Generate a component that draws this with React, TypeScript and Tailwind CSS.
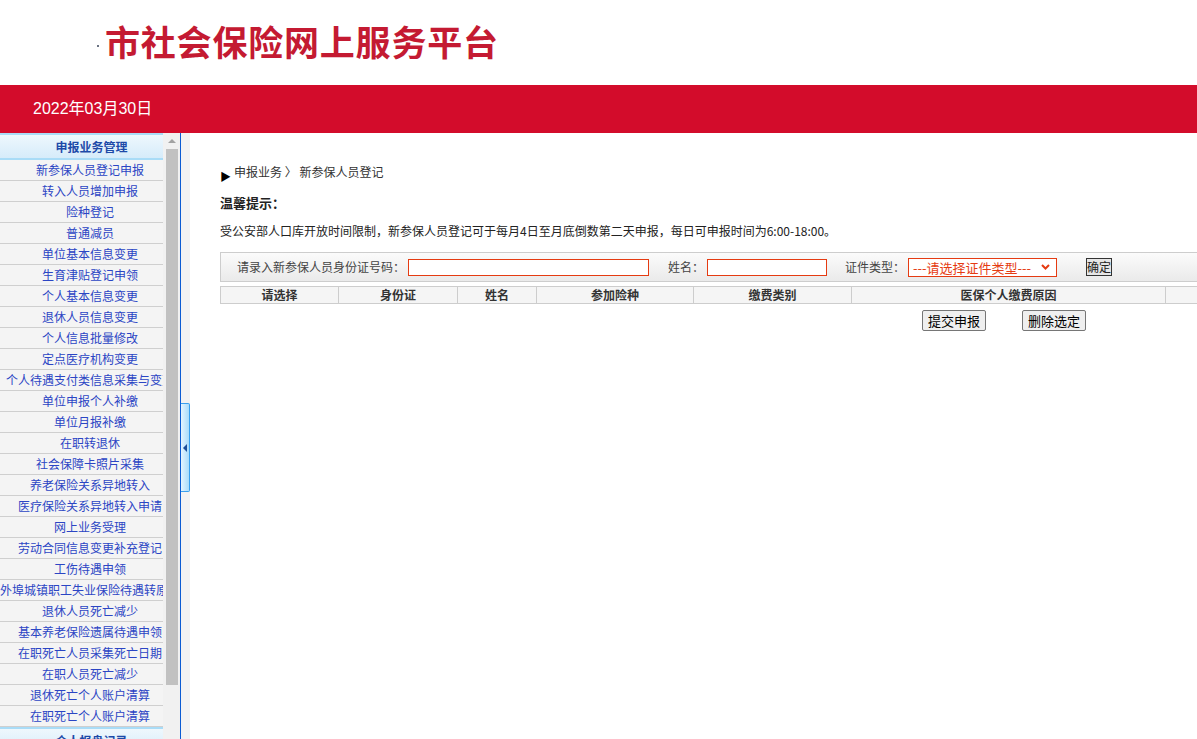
import React from "react";

const items = [
  "新参保人员登记申报",
  "转入人员增加申报",
  "险种登记",
  "普通减员",
  "单位基本信息变更",
  "生育津贴登记申领",
  "个人基本信息变更",
  "退休人员信息变更",
  "个人信息批量修改",
  "定点医疗机构变更",
  "个人待遇支付类信息采集与变更",
  "单位申报个人补缴",
  "单位月报补缴",
  "在职转退休",
  "社会保障卡照片采集",
  "养老保险关系异地转入",
  "医疗保险关系异地转入申请",
  "网上业务受理",
  "劳动合同信息变更补充登记",
  "工伤待遇申领",
  "外埠城镇职工失业保险待遇转原籍",
  "退休人员死亡减少",
  "基本养老保险遗属待遇申领",
  "在职死亡人员采集死亡日期",
  "在职人员死亡减少",
  "退休死亡个人账户清算",
  "在职死亡个人账户清算",
];

const cols = [
  { t: "请选择", w: 118 },
  { t: "身份证", w: 119 },
  { t: "姓名", w: 79 },
  { t: "参加险种", w: 157 },
  { t: "缴费类别", w: 158 },
  { t: "医保个人缴费原因", w: 314 },
  { t: "", w: 60 },
];

const font = { fontFamily: '"Noto Sans CJK SC", "Liberation Sans", sans-serif' } as React.CSSProperties;

export default function App() {
  return (
    <div className="w-[1197px] h-[739px] overflow-hidden bg-white flex flex-col" style={font}>
      {/* header */}
      <div className="h-[85px] shrink-0 flex items-center pl-[97px] pb-[4px]">
        <span className="w-[2px] h-[2px] bg-gray-500 mt-[10px] mr-[6px]" />
        <span className="text-[35px] font-bold text-[#c41a32] leading-none tracking-[0.8px]">市社会保险网上服务平台</span>
      </div>
      <div className="h-[48px] shrink-0 bg-[#d30c2b] flex items-center pl-[33px]">
        <span className="text-white text-[16px]" style={{ fontFamily: '"Liberation Sans", "Noto Sans CJK SC", sans-serif' }}>2022年03月30日</span>
      </div>

      <div className="flex flex-1 min-h-0">
        {/* sidebar */}
        <div className="w-[180px] shrink-0 flex">
          <div className="w-[163px] flex flex-col overflow-hidden bg-[#f4f4f4]">
            <div className="h-[27px] shrink-0 border-t-2 border-b-2 border-[#a9dcf7] bg-gradient-to-b from-[#eef7fd] to-[#d6ecfa] flex items-center justify-center pl-[20px]">
              <span className="text-[12px] font-bold text-[#1d4aa8]">申报业务管理</span>
            </div>
            {items.map((it) => (
              <div key={it} className="h-[21px] shrink-0 border-b border-[#cfcfcf] flex items-center justify-center overflow-hidden pl-[17px]">
                <span className="text-[12px] text-[#2b45c4] whitespace-nowrap">{it}</span>
              </div>
            ))}
            <div className="h-[25px] shrink-0 border-t-2 border-[#a9dcf7] bg-gradient-to-b from-[#eef7fd] to-[#d6ecfa] flex items-center justify-center pl-[20px]">
              <span className="text-[12px] font-bold text-[#1d4aa8]">个人报盘记录</span>
            </div>
          </div>
          <div className="w-[17px] bg-[#f1f1f1] flex flex-col items-center">
            <div className="h-[16px] flex items-center justify-center">
              <div className="w-0 h-0 border-l-[4px] border-r-[4px] border-b-[4px] border-l-transparent border-r-transparent border-b-[#a3a3a3]" />
            </div>
            <div className="w-[12px] h-[536px] bg-[#c1c1c1]" />
          </div>
        </div>
        <div className="w-px bg-[#0b5bd3] shrink-0" />
        <div className="w-[9px] shrink-0 bg-[#f2f2f2] flex flex-col">
          <div className="h-[270px]" />
          <div className="h-[89px] w-[9px] rounded-r-[2px] border border-l-0 border-[#3aa0ee] bg-gradient-to-r from-[#e6f5fe] to-[#a9dcfb] flex items-center justify-center">
            <div className="w-0 h-0 border-t-[4px] border-b-[4px] border-r-[4px] border-t-transparent border-b-transparent border-r-[#1d4f9a]" />
          </div>
        </div>

        {/* main */}
        <div className="flex-1 min-w-0 overflow-hidden pl-[30px] pt-[31px] text-[#333]">
          <div className="flex items-center h-[16px] text-[12px]">
            <span className="text-[11px] text-black mt-[9px] mr-[3px] leading-none">▶</span>
            <span>申报业务 〉 新参保人员登记</span>
          </div>
          <div className="mt-[15px] h-[16px] flex items-center text-[13px] font-bold text-[#222]">温馨提示：</div>
          <div className="mt-[12px] h-[16px] flex items-center text-[12px] text-[#222] whitespace-nowrap">
            受公安部人口库开放时间限制，新参保人员登记可于每月4日至月底倒数第二天申报，每日可申报时间为6:00-18:00。
          </div>
          <div className="mt-[13px] w-[1000px] h-[30px] border border-[#cdcdcd] bg-gradient-to-b from-[#fbfbfb] to-[#eaeaea] flex items-center text-[12px] text-[#444] whitespace-nowrap">
            <span className="ml-[16px]">请录入新参保人员身份证号码：</span>
            <div className="ml-[3px] w-[241px] h-[17px] border border-[#e53b12] bg-white" />
            <span className="ml-[19px]">姓名：</span>
            <div className="ml-[3px] w-[120px] h-[17px] border border-[#e53b12] bg-white" />
            <span className="ml-[18px]">证件类型：</span>
            <div className="ml-[3px] w-[149px] h-[19px] border border-[#e53b12] bg-white flex items-center justify-between pl-[4px] pr-[6px]">
              <span className="text-[13px] text-[#e53b12] leading-none">---请选择证件类型---</span>
              <svg width="9" height="6" viewBox="0 0 9 6"><path d="M1 1l3.5 3.5L8 1" stroke="#e53b12" strokeWidth="2" fill="none" /></svg>
            </div>
            <div className="ml-[29px] w-[26px] h-[18px] border border-[#333] bg-[#e6e6e6] flex items-center justify-center text-[12px] text-[#222]">确定</div>
          </div>
          <div className="mt-[4px] w-[1000px] h-[18px] border border-[#cdcdcd] bg-[#f5f5f5] flex">
            {cols.map((c, i) => (
              <div key={i} style={{ width: c.w }} className={`shrink-0 flex items-center justify-center text-[12px] font-bold text-[#333] ${i < cols.length - 1 ? "border-r border-[#cdcdcd]" : ""}`}>
                {c.t}
              </div>
            ))}
          </div>
          <div className="mt-[6px] flex" style={{ width: 1000 }}>
            <div className="ml-[702px] h-[21px] px-[5px] border border-[#767676] rounded-[2px] bg-[#efefef] flex items-center text-[13px] text-black">提交申报</div>
            <div className="ml-[36px] h-[21px] px-[5px] border border-[#767676] rounded-[2px] bg-[#efefef] flex items-center text-[13px] text-black">删除选定</div>
          </div>
        </div>
      </div>
    </div>
  );
}
